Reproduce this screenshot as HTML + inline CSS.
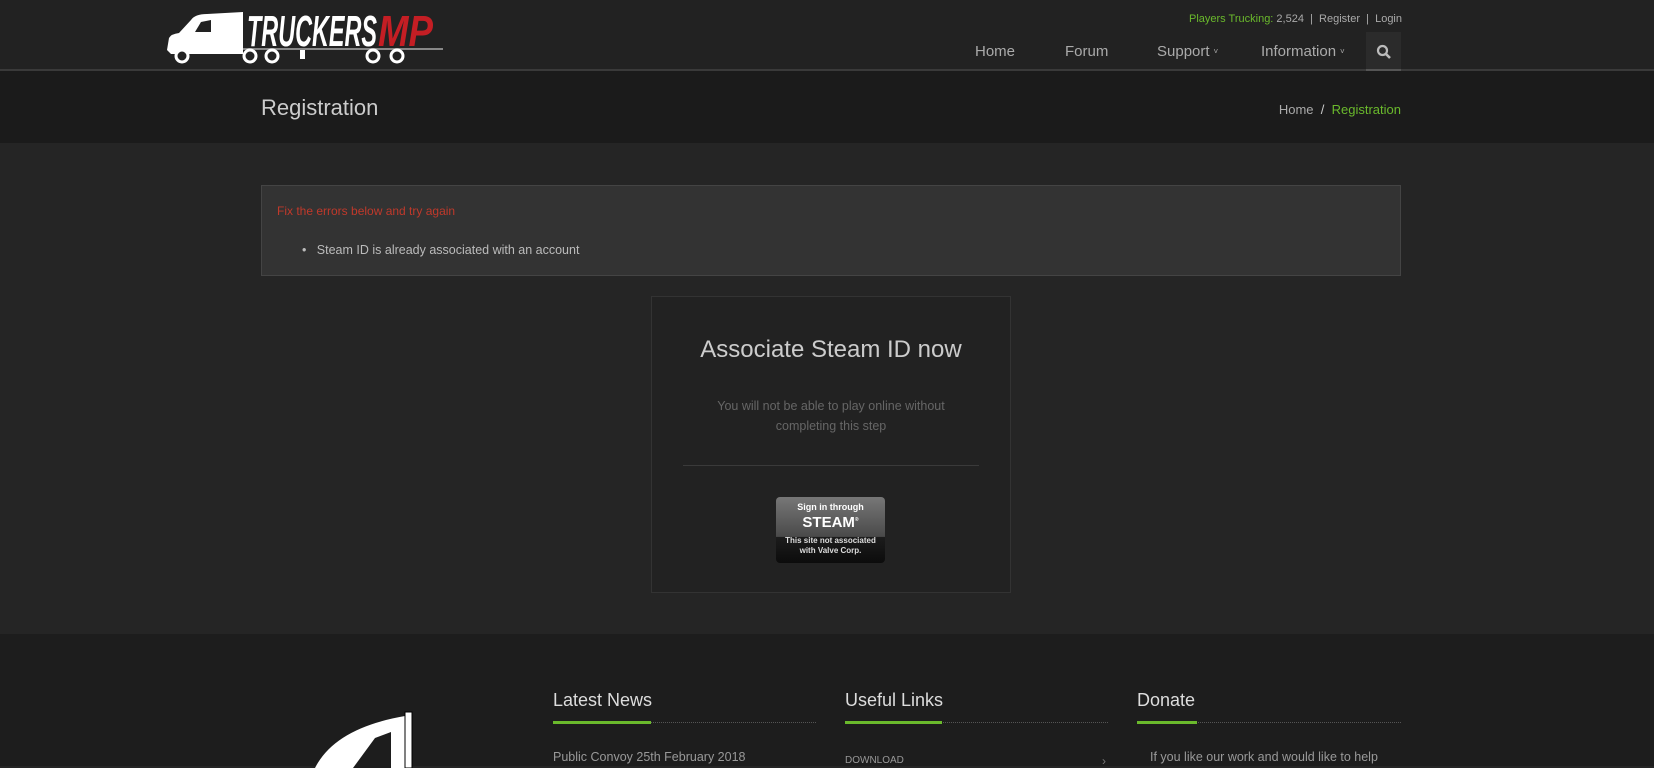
<!DOCTYPE html>
<html><head><meta charset="utf-8"><style>
*{margin:0;padding:0;box-sizing:border-box}
body{width:1654px;height:766px;overflow:hidden;background:#252525;font-family:"Liberation Sans",sans-serif;color:#aaa;position:relative}
.abs{position:absolute}
#hdr{left:0;top:0;width:1654px;height:71px;background:#222;border-bottom:2px solid #3a3a3a}
#tb{left:0;top:71px;width:1654px;height:72px;background:#1b1b1b}
#ft{left:0;top:634px;width:1654px;height:132px;background:#1d1d1d}
.nav{top:43px;font-size:15px;color:#aaa}
.chev{font-size:8px;vertical-align:2px;margin-left:4px}
.top{top:13px;font-size:11px;color:#aaa}
.fh{font-size:18px;color:#ddd;font-weight:300}
</style></head><body>
<div id="hdr" class="abs"></div>
<svg class="abs" style="left:165px;top:6px" width="280" height="60" viewBox="0 0 280 60">
 <path d="M2 44 L4 32 Q6 28 14 27 L26 14 Q30 8 42 8 L78 6 L78 48 L6 48 Z" fill="#fff"/>
 <path d="M30 26 L36 16 L46 14 L46 26 Z" fill="#222"/>
 <rect x="78" y="42" width="200" height="2" fill="#888"/>
 <rect x="135" y="44" width="5" height="9" fill="#fff"/>
 <g fill="#222" stroke="#fff" stroke-width="3"><circle cx="17" cy="50" r="6"/><circle cx="85" cy="50" r="6"/><circle cx="107" cy="50" r="6"/><circle cx="208" cy="50" r="6"/><circle cx="232" cy="50" r="6"/></g>
 <text x="82" y="40" font-family="Liberation Sans" font-style="italic" font-weight="bold" font-size="44" fill="#fff" textLength="130" lengthAdjust="spacingAndGlyphs">TRUCKERS</text>
 <text x="213" y="40" font-family="Liberation Sans" font-style="italic" font-weight="bold" font-size="44" fill="#c41e24" textLength="55" lengthAdjust="spacingAndGlyphs">MP</text>
</svg>
<div class="abs top" style="right:252px"><span style="color:#6ab92c">Players Trucking:</span> 2,524 &nbsp;|&nbsp; Register &nbsp;|&nbsp; Login</div>
<div class="abs nav" style="left:975px">Home</div>
<div class="abs nav" style="left:1065px">Forum</div>
<div class="abs nav" style="left:1157px">Support<span class="chev">˅</span></div>
<div class="abs nav" style="left:1261px">Information<span class="chev">˅</span></div>
<div class="abs" style="left:1366px;top:32px;width:35px;height:39px;background:#2b2b2b;border-bottom:2px solid #555"></div>
<svg class="abs" style="left:1376px;top:44px" width="16" height="16"><circle cx="6.5" cy="6.5" r="4.5" fill="none" stroke="#bbb" stroke-width="2.2"/><path d="M10 10 L14 14" stroke="#bbb" stroke-width="2.6"/></svg>
<div id="tb" class="abs"></div>
<div class="abs" style="left:261px;top:95px;font-size:22px;color:#ccc;font-weight:300">Registration</div>
<div class="abs" style="right:253px;top:102px;font-size:13px;color:#aaa">Home &nbsp;<span style="color:#ccc">/</span>&nbsp; <span style="color:#6ab92c">Registration</span></div>
<div class="abs" style="left:261px;top:185px;width:1140px;height:91px;background:#333;border:1px solid #444"></div>
<div class="abs" style="left:277px;top:204px;font-size:12px;color:#c0392b">Fix the errors below and try again</div>
<div class="abs" style="left:302px;top:243px;font-size:12.5px;color:#bbb">•&nbsp;&nbsp; Steam ID is already associated with an account</div>
<div class="abs" style="left:651px;top:296px;width:360px;height:297px;background:#222;border:1px solid #333"></div>
<div class="abs" style="left:651px;top:336px;width:360px;text-align:center;font-size:24px;color:#ccc;font-weight:300">Associate Steam ID now</div>
<div class="abs" style="left:701px;top:396px;width:260px;text-align:center;font-size:12.5px;line-height:20px;color:#666">You will not be able to play online without completing this step</div>
<div class="abs" style="left:683px;top:465px;width:296px;height:1px;background:#3a3a3a"></div>
<div class="abs" style="left:776px;top:497px;width:109px;height:66px;border-radius:4px;background:linear-gradient(#777,#4a4a4a 60%,#1c1c1c 61%,#0c0c0c);color:#fff;text-align:center;font-weight:bold">
 <div style="font-size:9px;margin-top:5px">Sign in through</div>
 <div style="font-size:15px;line-height:16px">STEAM<sup style="font-size:5px">®</sup></div>
 <div style="font-size:8px;margin-top:5px;line-height:10px;color:#ddd">This site not associated<br>with Valve Corp.</div>
</div>
<div id="ft" class="abs"></div>
<svg class="abs" style="left:295px;top:708px" width="140" height="60"><path d="M20 60 Q40 20 110 8 L110 60 Z" fill="#fff"/><path d="M58 60 L80 30 L96 24 L96 60Z" fill="#1d1d1d"/><rect x="110" y="4" width="7" height="56" fill="#fff" stroke="#000"/></svg>
<div class="abs fh" style="left:553px;top:690px">Latest News</div>
<div class="abs fh" style="left:845px;top:690px">Useful Links</div>
<div class="abs fh" style="left:1137px;top:690px">Donate</div>
<div class="abs" style="left:553px;top:722px;width:263px;border-top:1px dotted #555"></div>
<div class="abs" style="left:845px;top:722px;width:263px;border-top:1px dotted #555"></div>
<div class="abs" style="left:1137px;top:722px;width:264px;border-top:1px dotted #555"></div>
<div class="abs" style="left:553px;top:721px;width:98px;height:3px;background:#6ab92c"></div>
<div class="abs" style="left:845px;top:721px;width:97px;height:3px;background:#6ab92c"></div>
<div class="abs" style="left:1137px;top:721px;width:60px;height:3px;background:#6ab92c"></div>
<div class="abs" style="left:553px;top:750px;font-size:12.5px;color:#999">Public Convoy 25th February 2018</div>
<div class="abs" style="left:845px;top:755px;font-size:10px;color:#999">DOWNLOAD</div>
<div class="abs" style="left:1102px;top:754px;font-size:12px;color:#777">›</div>
<div class="abs" style="left:1150px;top:750px;font-size:12.5px;color:#999">If you like our work and would like to help</div>
</body></html>
